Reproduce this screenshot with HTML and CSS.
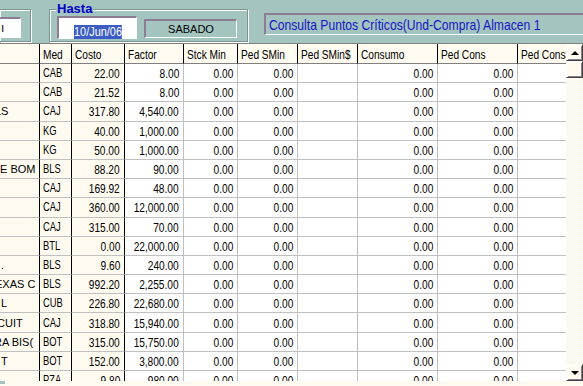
FILE: index.html
```html
<!DOCTYPE html>
<html>
<head>
  <title>Consulta Puntos Criticos</title>
  <meta charset="utf-8">
  <link rel="stylesheet" href="styles.css">
</head>
<body>
  <!-- Top panel: filters and title -->
  <div class="toppanel">
    <div class="group group-left">
      <div class="edit edit-cut">ı</div>
    </div>
    <div class="group group-hasta">
      <span class="legend">Hasta</span>
      <div class="edit edit-date"><span class="sel">10/Jun/06</span></div>
      <div class="daybox">SABADO</div>
    </div>
    <div class="titlebox"><span class="nw">Consulta Puntos Críticos(Und-Compra) Almacen 1</span></div>
  </div>

  <!-- Grid with vertical scrollbar -->
  <div class="gridwrap">
    <div class="grid">
      <div class="row head">
        <div class="cell fix"></div>
        <div class="cell fix"><span class="nw">Med</span></div>
        <div class="cell fix"><span class="nw">Costo</span></div>
        <div class="cell"><span class="nw">Factor</span></div>
        <div class="cell"><span class="nw">Stck Min</span></div>
        <div class="cell"><span class="nw">Ped SMin</span></div>
        <div class="cell"><span class="nw">Ped SMin$</span></div>
        <div class="cell"><span class="nw">Consumo</span></div>
        <div class="cell"><span class="nw">Ped Cons</span></div>
        <div class="cell"><span class="nw">Ped Cons$</span></div>
      </div>
      <div id="rows"></div>
    </div>
    <div class="vscroll">
      <div class="sbtn"><span class="arrow-up"></span></div>
      <div class="thumb"></div>
      <div class="track"></div>
      <div class="sbtn"><span class="arrow-down"></span></div>
    </div>
  </div>
  <div class="bottomstrip"><span class="tealbit"></span></div>

  <script>
    // desc fragment, text indent, unidad, costo, factor
    var data = [
      ["", 0, "CAB", "22.00", "8.00"],
      ["", 0, "CAB", "21.52", "8.00"],
      ["LS", -5, "CAJ", "317.80", "4,540.00"],
      ["", 0, "KG", "40.00", "1,000.00"],
      ["", 0, "KG", "50.00", "1,000.00"],
      ["E BOM", 0, "BLS", "88.20", "90.00"],
      ["", 0, "CAJ", "169.92", "48.00"],
      ["", 0, "CAJ", "360.00", "12,000.00"],
      ["", 0, "CAJ", "315.00", "70.00"],
      ["", 0, "BTL", "0.00", "22,000.00"],
      [".", 1, "BLS", "9.60", "240.00"],
      ["EXAS C", -5, "BLS", "992.20", "2,255.00"],
      ["L", 1, "CUB", "226.80", "22,680.00"],
      ["CUIT", -3, "CAJ", "318.80", "15,940.00"],
      ["RA BIS(", -6, "BOT", "315.00", "15,750.00"],
      ["T", 1, "BOT", "152.00", "3,800.00"],
      ["", 0, "PZA", "9.80", "980.00"]
    ];

    function num(v, extra) {
      return '<div class="cell num' + (extra || '') + '"><span class="nw">' + v + '</span></div>';
    }

    var rows = document.getElementById("rows");
    for (var i = 0; i < data.length; i++) {
      var d = data[i];
      var row = document.createElement("div");
      row.className = "row";
      row.innerHTML =
        '<div class="cell fix desc"><span style="margin-left:' + d[1] + 'px">' + d[0] + '</span></div>' +
        '<div class="cell fix unit"><span class="nw">' + d[2] + '</span></div>' +
        num(d[3], ' fix') +
        num(d[4]) +
        num("0.00") +
        num("0.00") +
        num("") +
        num("0.00") +
        num("0.00") +
        num("");
      rows.appendChild(row);
    }
  </script>
</body>
</html>
```

FILE: styles.css
```css
/* Page */
body {
  margin: 0;
  width: 583px;
  height: 386px;
  overflow: hidden;
  background-color: #a4c4c0;
  font-family: "Liberation Sans", Arial, sans-serif;
}

/* Narrow text: squeezed Arial, like the old bitmap narrow font */
.nw {
  display: inline-block;
  flex-shrink: 0;
  white-space: nowrap;
  transform: scaleX(0.78);
  transform-origin: left center;
}

/* Top panel */
.toppanel {
  display: flex;
  align-items: flex-start;
  height: 43px;
}

/* Etched group frames */
.group {
  position: relative;
  flex-shrink: 0;
  box-sizing: border-box;
  margin-top: 9px;
  height: 33px;
  border: 1px solid #7e9490;
  box-shadow: inset 1px 1px 0 #fff, 1px 1px 0 #fff;
  display: flex;
  align-items: flex-start;
}

.group-left {
  width: 31px;
  border-left: none;
  padding-top: 7px;
}

.group-hasta {
  width: 199px;
  margin-left: 18px;
  padding: 6px 0 0 7px;
}

.legend {
  position: absolute;
  top: -8px;
  left: 6px;
  padding: 0 1px;
  background-color: #a4c4c0;
  color: #0000c8;
  font-weight: bold;
  font-size: 13px;
  line-height: 14px;
}

/* Sunken boxes */
.edit, .daybox, .titlebox {
  box-sizing: border-box;
  border-top: 2px solid #8c7c94;
  border-left: 2px solid #8c7c94;
  border-bottom: 1px solid #fff;
  border-right: 1px solid #fff;
}

.edit {
  background-color: #fff;
}

.edit-cut {
  width: 21px;
  height: 21px;
  border-left: none;
  font-size: 12px;
  line-height: 18px;
  padding-left: 1px;
}

.edit-date {
  width: 80px;
  height: 23px;
  padding: 4px 0 0 15px;
}

.sel {
  display: inline-block;
  background-color: #3a5cc4;
  color: #fff;
  font-size: 13px;
  line-height: 14px;
  transform: scaleX(0.84);
  transform-origin: left center;
}

.daybox {
  width: 93px;
  height: 19px;
  margin: 3px 0 0 7px;
  text-align: center;
  font-size: 11px;
  line-height: 16px;
}

.titlebox {
  flex-shrink: 0;
  width: 330px;
  height: 22px;
  margin: 13px 0 0 16px;
  padding-left: 3px;
  color: #1414c8;
  font-size: 15px;
  line-height: 19px;
  white-space: nowrap;
  overflow: hidden;
}

.titlebox .nw {
  transform: scaleX(0.81);
}

/* Grid */
.gridwrap {
  display: flex;
  height: 337px;
  border-top: 1px solid #808080;
  background-color: #fff;
}

.grid {
  width: 566px;
  overflow: hidden;
}

.row {
  display: grid;
  grid-template-columns: 40px 32px 53px 59px 54px 60px 60px 80px 80px 48px;
  height: 19.2px;
}

.cell {
  box-sizing: border-box;
  display: flex;
  align-items: center;
  border-right: 1px solid #c0c0c0;
  border-bottom: 1px solid #c0c0c0;
  padding: 1px 3px 0;
  overflow: hidden;
  white-space: nowrap;
  font-size: 13px;
  line-height: 15px;
  color: #000;
}

.cell.fix {
  background-color: #fffbf0;
  border-right-color: #000;
}

.row .cell:last-child {
  border-right: none;
}

.head {
  height: 20px;
}

.head .cell {
  background-color: #fffbf0;
  border-right-color: #000;
  border-bottom-color: #808080;
}

.num {
  justify-content: flex-end;
  padding-right: 4px;
}

.num .nw {
  transform-origin: right center;
}

.desc {
  padding: 1px 0 0;
  font-size: 11px;
}

.unit {
  padding-left: 3px;
}

.unit .nw {
  font-size: 12px;
}

/* Vertical scrollbar */
.vscroll {
  width: 17px;
  display: flex;
  flex-direction: column;
  background: repeating-conic-gradient(#fff 0 25%, #fbf3e4 0 50%) 0 0 / 2px 2px;
}

.sbtn, .thumb {
  box-sizing: border-box;
  flex-shrink: 0;
  height: 17px;
  background-color: #fffbf0;
  border-top: 1px solid #fffbf0;
  border-left: 1px solid #fffbf0;
  border-right: 1px solid #404040;
  border-bottom: 1px solid #404040;
  box-shadow: inset 1px 1px 0 #fff, inset -1px -1px 0 #8c7c94;
  display: flex;
  align-items: center;
  justify-content: center;
}

.track {
  flex: 1;
}

.arrow-up {
  width: 0;
  height: 0;
  border-left: 4px solid transparent;
  border-right: 4px solid transparent;
  border-bottom: 4px solid #000;
}

.arrow-down {
  width: 0;
  height: 0;
  border-left: 4px solid transparent;
  border-right: 4px solid transparent;
  border-top: 4px solid #000;
}

/* Bottom strip under the grid */
.bottomstrip {
  height: 5px;
  background-color: #fffbf0;
}

.tealbit {
  display: block;
  width: 5px;
  height: 3px;
  background-color: #a4c4c0;
}
```
